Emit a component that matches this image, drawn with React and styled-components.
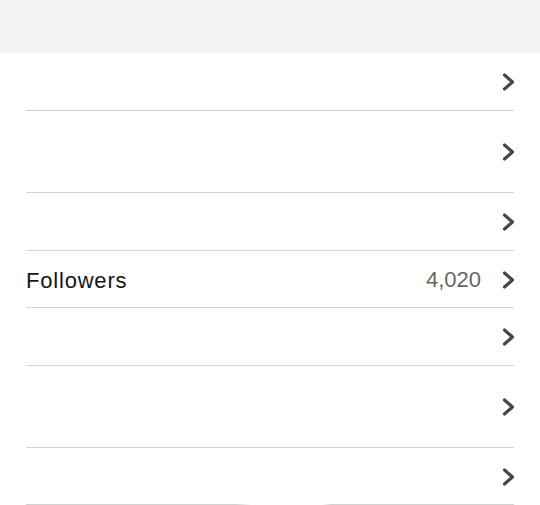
import styled, { createGlobalStyle } from "styled-components"

const GlobalStyle = createGlobalStyle`
  html, body {
    margin: 0;
    padding: 0;
    background: #ffffff;
    font-family: "Liberation Sans", Arial, sans-serif;
  }
`

const rows = [
  { height: 58 },
  { height: 82 },
  { height: 58 },
  { height: 57, label: "Followers", value: "4,020" },
  { height: 58 },
  { height: 82 },
  { height: 57, last: true },
]

const Chevron = () => (
  <svg width="13" height="18" viewBox="0 0 13 18" fill="none">
    <polyline
      points="2.5,2 10.5,9 2.5,16"
      stroke="#474747"
      strokeWidth="3.2"
      strokeLinecap="round"
      strokeLinejoin="round" />
  </svg>
)

export default function App() {
  return (
    <Page>
      <GlobalStyle />
      <TopBar />
      <List>
        {rows.map((row, i) => (
          <Row key={i} height={row.height} last={row.last}>
            <Label>{row.label}</Label>
            <Right>
              {row.value && <Value>{row.value}</Value>}
              <Chevron />
            </Right>
          </Row>
        ))}
      </List>
    </Page>
  )
}

const Page = styled.div`
  width: 540px;
  height: 505px;
  overflow: hidden;
  background: #ffffff;
`

const TopBar = styled.div`
  height: 53px;
  background: #f2f2f2;
`

const List = styled.div`
  display: flex;
  flex-direction: column;
  margin: 0 26px;
`

const Row = styled.div`
  display: flex;
  align-items: center;
  justify-content: space-between;
  box-sizing: border-box;
  height: ${({ height }) => height}px;
  padding-top: 1px;
  border-bottom: 1px solid transparent;
  border-image: ${({ last }) => last
    ? 'linear-gradient(to right, #d2d2d2 0, #d2d2d2 210px, transparent 225px, transparent 296px, #d2d2d2 305px, #d2d2d2 100%) 1'
    : 'linear-gradient(#d2d2d2, #d2d2d2) 1'};
`

const Label = styled.span`
  font-size: 22px;
  letter-spacing: 0.8px;
  color: #151515;
  padding-top: 2px;
`

const Right = styled.div`
  display: flex;
  align-items: center;
  gap: 21px;
  margin-right: -1px;
`

const Value = styled.span`
  font-size: 22px;
  color: #666666;
  padding-top: 1px;
`
